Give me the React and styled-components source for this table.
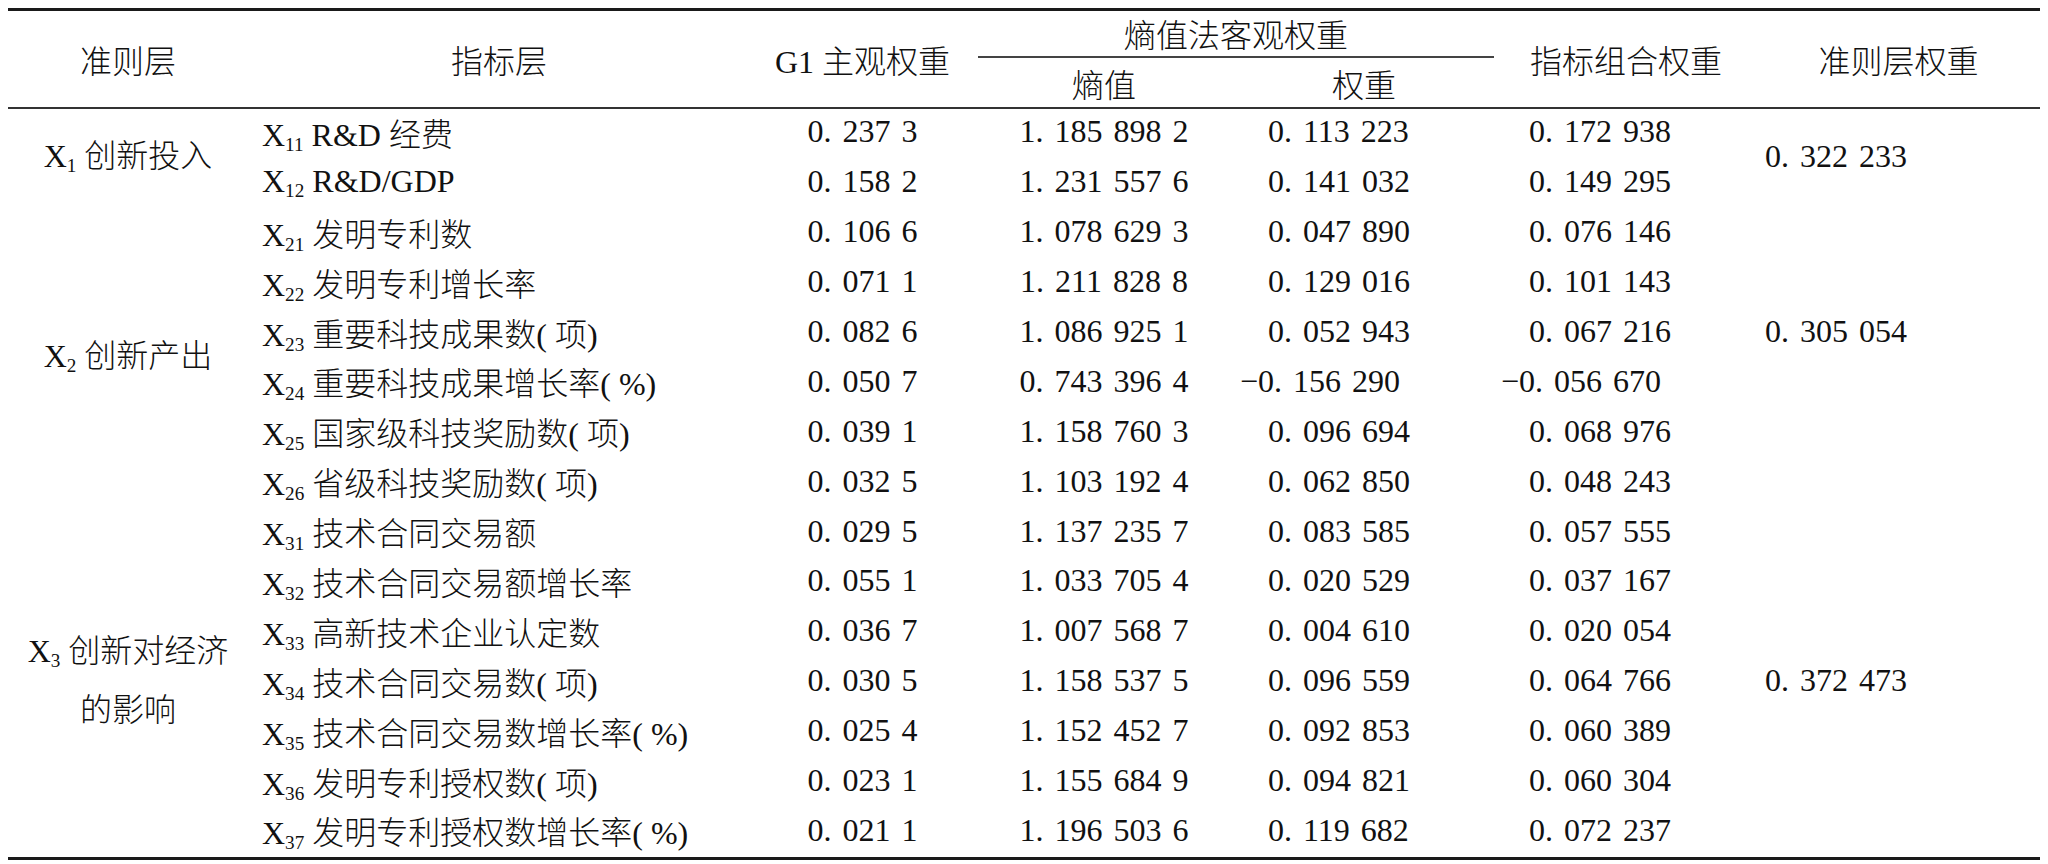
import React from "react";
import styled, { createGlobalStyle } from "styled-components";

const GlobalStyle = createGlobalStyle`
  body {
    margin: 8px;
    background: #fff;
    color: #111;
    font-family: "Liberation Serif", "Noto Sans CJK SC", serif;
  }
`;

const COLS = "240px 502px 225px 258px 262px 262px 283px";

const Table = styled.div`
  width: 2032px;
  border-top: 3px solid #1a1a1a;
  border-bottom: 3px solid #1a1a1a;
  font-size: 32px;
  font-weight: 300;
`;

const Head = styled.div`
  display: grid;
  grid-template-columns: ${COLS};
  grid-template-rows: 47px 49px;
  border-bottom: 2px solid #333;
`;

const HeadCell = styled.div`
  display: flex;
  align-items: center;
  justify-content: center;
  grid-column: ${(p) => p.$col};
  grid-row: ${(p) => p.$row};
  white-space: pre;
`;

const GroupCell = styled(HeadCell)`
  margin: 0 1px 0 3px;
  border-bottom: 2px solid #444;
  padding-bottom: 2px;
`;

const Body = styled.div`
  display: grid;
  grid-template-columns: ${COLS};
  grid-template-rows: repeat(15, 49.9px);
`;

const Label = styled.div`
  grid-column: 1;
  grid-row: ${(p) => p.$rows};
  display: flex;
  flex-direction: column;
  align-items: center;
  justify-content: center;
  line-height: 59px;
  padding-bottom: 4px;
`;

const Indicator = styled.div`
  grid-column: 2;
  grid-row: ${(p) => p.$row};
  display: flex;
  align-items: center;
  padding-left: 14px;
  padding-bottom: 4px;
  white-space: pre;
`;

const Sub = styled.sub`
  font-size: 0.6em;
  vertical-align: -0.24em;
  line-height: 0;
`;

const Value = styled.div`
  grid-column: ${(p) => p.$col};
  grid-row: ${(p) => p.$row};
  display: flex;
  align-items: center;
  justify-content: ${(p) => (p.$center ? "center" : "flex-start")};
  padding-left: ${(p) => p.$pad || 0}px;
  padding-bottom: 4px;
  word-spacing: 3px;
  white-space: pre;
`;

const Num = styled.span`
  margin-left: ${(p) => (p.$neg ? "-28px" : "0")};
`;

const rows = [
  ["11", "R&D 经费", "0. 237 3", "1. 185 898 2", "0. 113 223", "0. 172 938"],
  ["12", "R&D/GDP", "0. 158 2", "1. 231 557 6", "0. 141 032", "0. 149 295"],
  ["21", "发明专利数", "0. 106 6", "1. 078 629 3", "0. 047 890", "0. 076 146"],
  ["22", "发明专利增长率", "0. 071 1", "1. 211 828 8", "0. 129 016", "0. 101 143"],
  ["23", "重要科技成果数( 项)", "0. 082 6", "1. 086 925 1", "0. 052 943", "0. 067 216"],
  ["24", "重要科技成果增长率( %)", "0. 050 7", "0. 743 396 4", "−0. 156 290", "−0. 056 670"],
  ["25", "国家级科技奖励数( 项)", "0. 039 1", "1. 158 760 3", "0. 096 694", "0. 068 976"],
  ["26", "省级科技奖励数( 项)", "0. 032 5", "1. 103 192 4", "0. 062 850", "0. 048 243"],
  ["31", "技术合同交易额", "0. 029 5", "1. 137 235 7", "0. 083 585", "0. 057 555"],
  ["32", "技术合同交易额增长率", "0. 055 1", "1. 033 705 4", "0. 020 529", "0. 037 167"],
  ["33", "高新技术企业认定数", "0. 036 7", "1. 007 568 7", "0. 004 610", "0. 020 054"],
  ["34", "技术合同交易数( 项)", "0. 030 5", "1. 158 537 5", "0. 096 559", "0. 064 766"],
  ["35", "技术合同交易数增长率( %)", "0. 025 4", "1. 152 452 7", "0. 092 853", "0. 060 389"],
  ["36", "发明专利授权数( 项)", "0. 023 1", "1. 155 684 9", "0. 094 821", "0. 060 304"],
  ["37", "发明专利授权数增长率( %)", "0. 021 1", "1. 196 503 6", "0. 119 682", "0. 072 237"],
];

// criterion groups: label rows and where the criterion weight sits
const groups = [
  { sub: "1", lines: ["创新投入"], rows: "1 / 3", wRows: "1 / 3", weight: "0. 322 233" },
  { sub: "2", lines: ["创新产出"], rows: "3 / 9", wRows: "3 / 8", weight: "0. 305 054" },
  { sub: "3", lines: ["创新对经济", "的影响"], rows: "9 / 16", wRows: "9 / 16", weight: "0. 372 473" },
];

const Cell = ({ col, row, pad, center, text }) => (
  <Value $col={col} $row={row} $pad={pad} $center={center}>
    <Num $neg={text.startsWith("−")}>{text}</Num>
  </Value>
);

const App = () => {
  return (
    <>
      <GlobalStyle />
      <Table>
        <Head>
          <HeadCell $col="1" $row="1 / 3">准则层</HeadCell>
          <HeadCell $col="2" $row="1 / 3">指标层</HeadCell>
          <HeadCell $col="3" $row="1 / 3">G1 主观权重</HeadCell>
          <GroupCell $col="4 / 6" $row="1">熵值法客观权重</GroupCell>
          <HeadCell $col="4" $row="2">熵值</HeadCell>
          <HeadCell $col="5" $row="2">权重</HeadCell>
          <HeadCell $col="6" $row="1 / 3">指标组合权重</HeadCell>
          <HeadCell $col="7" $row="1 / 3">准则层权重</HeadCell>
        </Head>
        <Body>
          {groups.map((g) => (
            <Label key={g.sub} $rows={g.rows}>
              {g.lines.map((l, i) => (
                <div key={i}>
                  {i === 0 ? (
                    <>
                      X<Sub>{g.sub}</Sub> {l}
                    </>
                  ) : (
                    l
                  )}
                </div>
              ))}
            </Label>
          ))}
          {rows.map((r, i) => {
            const row = i + 1;
            return (
              <React.Fragment key={r[0]}>
                <Indicator $row={row}>
                  <span>
                    X<Sub>{r[0]}</Sub> {r[1]}
                  </span>
                </Indicator>
                <Cell col={3} row={row} center text={r[2]} />
                <Cell col={4} row={row} center text={r[3]} />
                <Cell col={5} row={row} pad={35} text={r[4]} />
                <Cell col={6} row={row} pad={34} text={r[5]} />
              </React.Fragment>
            );
          })}
          {groups.map((g) => (
            <Cell key={g.sub} col={7} row={g.wRows} pad={8} text={g.weight} />
          ))}
        </Body>
      </Table>
    </>
  );
};

export default App;
